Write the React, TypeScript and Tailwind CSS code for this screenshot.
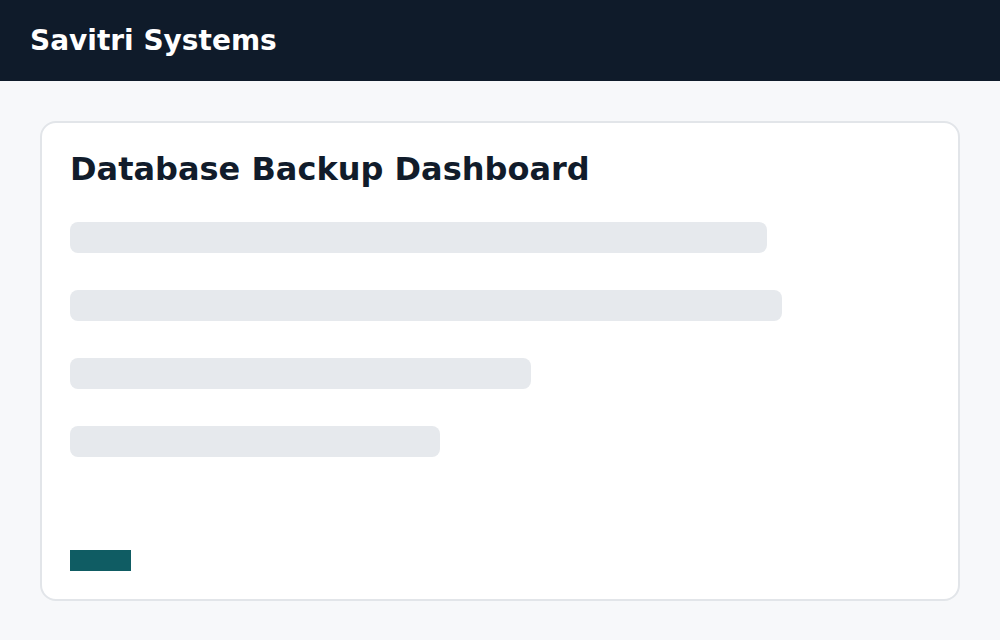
import React from 'react';

const bars = [697, 712, 461, 370];

export default function App() {
  return (
    <div className="min-h-screen bg-[#f7f8fa]" style={{ fontFamily: '"DejaVu Sans", sans-serif' }}>
      {/* Header */}
      <header className="h-[81px] bg-[#0f1b2a] px-[30px] flex items-center">
        <h1 className="text-white text-[28px] font-bold">Savitri Systems</h1>
      </header>

      {/* Card */}
      <main className="px-10 pt-10">
        <div className="h-[480px] bg-white border-2 border-[#e2e5e9] rounded-2xl px-7 pt-[26px] pb-7 flex flex-col">
          <h2 className="text-[32px] font-bold text-[#111c2b] leading-10">Database Backup Dashboard</h2>
          <div className="mt-[33px] flex flex-col gap-[37px]">
            {bars.map((w, i) => (
              <div key={i} className="h-[31px] rounded-lg bg-[#e6e9ed]" style={{ width: w }} />
            ))}
          </div>
          <div className="mt-auto w-[61px] h-[21px] bg-[#0f5c63]" />
        </div>
      </main>
    </div>
  );
}
